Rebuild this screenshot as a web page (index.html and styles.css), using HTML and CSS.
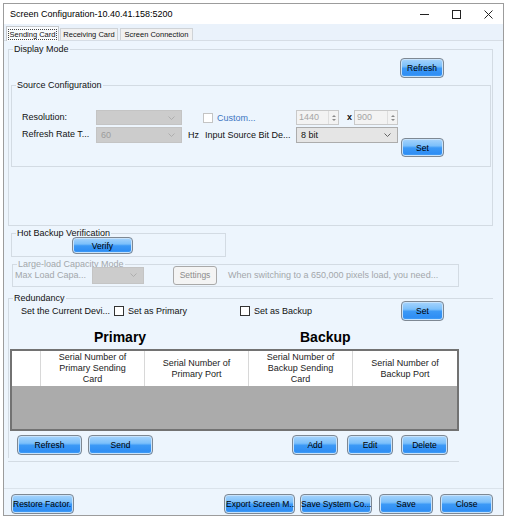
FILE: index.html
```html
<!DOCTYPE html>
<html>
<head>
<meta charset="utf-8">
<title>Screen Configuration</title>
<link rel="stylesheet" href="styles.css">
</head>
<body>
<div class="window">
  <div class="titlebar">
    <span class="title">Screen Configuration-10.40.41.158:5200</span>
    <div class="controls">
      <svg width="9" height="9" viewBox="0 0 9 9"><path d="M0 4.5H9" stroke="#222" stroke-width="1"/></svg>
      <svg width="9" height="9" viewBox="0 0 9 9"><rect x="0.5" y="0.5" width="8" height="8" fill="none" stroke="#222" stroke-width="1"/></svg>
      <svg width="9" height="9" viewBox="0 0 9 9"><path d="M0.5 0.5L8.5 8.5M8.5 0.5L0.5 8.5" stroke="#222" stroke-width="1"/></svg>
    </div>
  </div>

  <div class="tabs">
    <div class="tab active"><span class="focus">Sending Card</span></div>
    <div class="tab t-recv">Receiving Card</div>
    <div class="tab t-conn">Screen Connection</div>
  </div>

  <div class="page">
    <div class="group g-display">
      <div class="gtitle">Display Mode</div>
      <div class="refresh-row"><button class="btn b-refresh">Refresh</button></div>

      <div class="group g-source">
        <div class="gtitle">Source Configuration</div>
        <div class="src-row r1">
          <span class="lbl">Resolution:</span>
          <div class="combo disabled w86"><span class="ctext"></span><svg class="chev" width="7" height="4" viewBox="0 0 7 4"><path d="M0.5 0.5L3.5 3.5L6.5 0.5" fill="none" stroke="#aaa" stroke-width="0.9"/></svg></div>
          <div class="chk-wrap">
            <span class="chk light"></span><span class="custom">Custom...</span>
          </div>
          <div class="spin w43"><span class="stext">1440</span><span class="sarrows"><i class="up"></i><i class="down"></i></span></div>
          <span class="xsep">x</span>
          <div class="spin w44"><span class="stext">900</span><span class="sarrows"><i class="up"></i><i class="down"></i></span></div>
        </div>
        <div class="src-row r2">
          <span class="lbl">Refresh Rate T...</span>
          <div class="combo disabled w86"><span class="ctext">60</span><svg class="chev" width="7" height="4" viewBox="0 0 7 4"><path d="M0.5 0.5L3.5 3.5L6.5 0.5" fill="none" stroke="#aaa" stroke-width="0.9"/></svg></div>
          <span class="hz">Hz</span>
          <span class="lbl2">Input Source Bit De...</span>
          <div class="combo active w102"><span class="ctext">8 bit</span><svg class="chev" width="7" height="4" viewBox="0 0 7 4"><path d="M0.5 0.5L3.5 3.5L6.5 0.5" fill="none" stroke="#555" stroke-width="0.9"/></svg></div>
          <button class="btn b-set1">Set</button>
        </div>
      </div>
    </div>

    <div class="group g-hot">
      <div class="gtitle">Hot Backup Verification</div>
      <button class="btn b-verify">Verify</button>
    </div>

    <div class="group g-large">
      <div class="gtitle dim">Large-load Capacity Mode</div>
      <div class="large-row">
        <span class="lbl3 dim">Max Load Capa...</span>
        <div class="combo disabled w52"><span class="ctext"></span><svg class="chev" width="7" height="4" viewBox="0 0 7 4"><path d="M0.5 0.5L3.5 3.5L6.5 0.5" fill="none" stroke="#aaa" stroke-width="0.9"/></svg></div>
        <button class="dbtn">Settings</button>
        <span class="note dim">When switching to a 650,000 pixels load, you need...</span>
      </div>
    </div>

    <div class="group g-red">
      <div class="gtitle">Redundancy</div>
      <div class="red-row">
        <span class="lbl4">Set the Current Devi...</span>
        <div class="cb cb1"><span class="chk"></span><span>Set as Primary</span></div>
        <div class="cb cb2"><span class="chk"></span><span>Set as Backup</span></div>
        <button class="btn b-set2">Set</button>
      </div>
      <div class="heads">
        <span class="h-primary">Primary</span>
        <span class="h-backup">Backup</span>
      </div>
      <div class="table">
        <div class="thead">
          <div class="th"></div>
          <div class="th">Serial Number of<br>Primary Sending<br>Card</div>
          <div class="th">Serial Number of<br>Primary Port</div>
          <div class="th">Serial Number of<br>Backup Sending<br>Card</div>
          <div class="th">Serial Number of<br>Backup Port</div>
        </div>
        <div class="tbody"></div>
      </div>
      <div class="tbl-btns">
        <button class="btn b-w65">Refresh</button>
        <button class="btn b-w65 b-send">Send</button>
        <button class="btn b-add">Add</button>
        <button class="btn b-edit">Edit</button>
        <button class="btn b-del">Delete</button>
      </div>
    </div>
  </div>

  <div class="footer">
    <button class="btn f-restore">Restore Factor.</button>
    <button class="btn f-export">Export Screen M...</button>
    <button class="btn f-savesys">Save System Co...</button>
    <button class="btn f-save">Save</button>
    <button class="btn f-close">Close</button>
  </div>
</div>
</body>
</html>
```

FILE: styles.css
```css
* { box-sizing: border-box; }
html, body { margin: 0; padding: 0; background: #ffffff; }
body {
  font-family: "Liberation Sans", Arial, sans-serif;
  font-size: 9px;
  color: #111;
}

.window {
  margin: 3px 0 0 3px;
  width: 501px;
  height: 513px;
  border: 1px solid #9c9c9c;
  background: #edf5fd;
  display: flex;
  flex-direction: column;
}

/* title bar */
.titlebar {
  height: 20px;
  flex: none;
  background: #ffffff;
  display: flex;
  align-items: center;
  padding-left: 6px;
}
.title { font-size: 9px; color: #000; }
.controls {
  margin-left: auto;
  display: flex;
  align-items: center;
  gap: 23px;
  padding-right: 10px;
}
.controls svg { display: block; }

/* tabs */
.tabs {
  height: 17px;
  flex: none;
  display: flex;
  align-items: flex-end;
  padding-left: 2px;
  border-bottom: 1px solid #d6dde5;
  background: #eaf2fb;
}
.tab {
  height: 12px;
  border: 1px solid #cfd3d7;
  border-bottom: none;
  background: #f1f1f1;
  font-size: 7.5px;
  line-height: 11px;
  text-align: center;
  margin-left: 1px;
  color: #111;
}
.tab.active {
  width: 53px;
  height: 15px;
  margin-left: 0;
  margin-bottom: -1px;
  background: #f9fbfd;
  padding: 2px 1px 0;
  border-color: #c6c9cc;
}
.focus {
  display: block;
  border: 1px dotted #444;
  line-height: 9px;
  height: 11px;
}
.t-recv { width: 58px; margin-left: 1px; }
.t-conn { width: 73px; margin-left: 2px; }

/* page */
.page {
  height: 447px;
  flex: none;
  padding-top: 8px;
}

.group {
  border: 1px solid #d3dbe3;
}
.gtitle {
  width: fit-content;
  height: 11px;
  line-height: 11px;
  margin: -6px 0 -5px 4px;
  padding: 0 1px;
  background: #edf5fd;
  font-size: 9px;
  color: #111;
}
.dim { color: #a3a7ab; }

.g-display {
  margin-left: 4px;
  width: 485px;
  height: 177px;
}
.refresh-row {
  display: flex;
  justify-content: flex-end;
  padding-right: 48px;
  margin-top: 8px;
}
.g-source {
  margin: 7px 1px 0 2px;
  height: 82px;
}
.src-row {
  display: flex;
  padding-left: 10px;
}
.r1 { margin-top: 24px; height: 15px; align-items: center; }
.r2 { margin-top: 2px; align-items: flex-start; }
.lbl { width: 74px; }
.r1 .lbl { line-height: 15px; }
.r2 .lbl { line-height: 14px; }

.combo {
  display: flex;
  align-items: center;
  height: 15px;
  padding: 0 6px 0 4px;
  border: 1px solid #c2c2c2;
}
.r2 .combo { height: 16px; }
.combo.disabled { background: #cccccc; color: #9c9c9c; border-color: #c4c4c4; }
.combo.active { background: #e5e5e5; border-color: #acacac; color: #111; }
.ctext { flex: 1; }
.chev { display: block; }
.w86 { width: 86px; }
.w102 { width: 102px; }
.w52 { width: 52px; height: 17px; }

.chk-wrap {
  display: flex;
  align-items: center;
  width: 93px;
  margin-left: 21px;
}
.chk {
  display: inline-block;
  width: 10px;
  height: 10px;
  border: 1px solid #333;
  background: #fff;
  flex: none;
}
.chk.light { border-color: #c4c4c4; }
.custom { margin-left: 4px; color: #3c74c2; }

.spin {
  display: flex;
  height: 15px;
  border: 1px solid #c9c9c9;
  background: #f3f3f3;
  color: #a5a5a5;
}
.w43 { width: 43px; }
.w44 { width: 44px; }
.stext { flex: 1; padding-left: 2px; line-height: 13px; }
.sarrows {
  width: 10px;
  border-left: 1px solid #dedede;
  display: flex;
  flex-direction: column;
  align-items: center;
  justify-content: center;
  gap: 2px;
}
.sarrows i {
  display: block;
  width: 0;
  height: 0;
  border-left: 2px solid transparent;
  border-right: 2px solid transparent;
}
.sarrows .up { border-bottom: 2px solid #8a8a8a; }
.sarrows .down { border-top: 2px solid #8a8a8a; }
.xsep { width: 15px; padding-left: 8px; font-weight: bold; line-height: 15px; }

.hz { margin-left: 6px; width: 17px; line-height: 17px; }
.lbl2 { width: 91px; line-height: 17px; }

/* buttons */
.btn {
  display: block;
  font-family: "Liberation Sans", Arial, sans-serif;
  font-size: 8.5px;
  color: #000;
  height: 20px;
  padding: 0;
  border: 1px solid #7e8893;
  border-radius: 4px;
  background: linear-gradient(#a7d4fc 0%, #7cc0fb 40%, #3c99f6 52%, #2f8ef4 85%, #4ca5f7 100%);
  box-shadow: inset 0 0 0 1px #c7e2fb;
  white-space: nowrap;
  overflow: hidden;
  text-align: center;
}
.b-refresh { width: 44px; }
.b-set1 { width: 43px; height: 19px; margin-left: 3px; margin-top: 11px; }

.g-hot {
  margin: 7px 0 0 7px;
  width: 215px;
  height: 24px;
}
.b-verify { width: 61px; height: 17px; margin: 3px 0 0 60px; }

.g-large {
  margin: 7px 0 0 8px;
  width: 447px;
  height: 23px;
}
.large-row {
  display: flex;
  align-items: center;
  height: 20px;
  padding-left: 2px;
}
.lbl3 { width: 77px; }
.dbtn {
  font-family: "Liberation Sans", Arial, sans-serif;
  font-size: 8.5px;
  color: #8c8c8c;
  width: 44px;
  height: 19px;
  margin-left: 29px;
  padding: 0;
  border: 1px solid #a9a9a9;
  border-radius: 3px;
  background: #f4f4f4;
}
.note { margin-left: 11px; }

.g-red {
  margin: 11px 0 0 4px;
  width: 485px;
  height: 160px;
  border-right: none;
  border-bottom: none;
}
.red-row {
  display: flex;
  align-items: center;
  margin-top: 2px;
  height: 20px;
  padding-left: 12px;
}
.lbl4 { width: 93px; }
.cb { display: flex; align-items: center; }
.cb .chk { margin-right: 4px; }
.cb1 { width: 126px; }
.cb2 { width: 161px; }
.b-set2 { width: 43px; }

.heads {
  margin-top: 8px;
  height: 16px;
  display: flex;
  font-size: 14px;
  font-weight: bold;
  line-height: 16px;
  color: #000;
}
.h-primary { margin-left: 85px; width: 52px; }
.h-backup { margin-left: 154px; }

.table {
  margin: 4px 0 0 1px;
  width: 449px;
  height: 82px;
  border: 2px solid #727272;
  display: flex;
  flex-direction: column;
}
.thead {
  height: 35px;
  background: #ffffff;
  display: grid;
  grid-template-columns: 28px 104px 104px 104px 1fr;
}
.th {
  display: flex;
  align-items: center;
  justify-content: center;
  text-align: center;
  font-size: 9px;
  line-height: 11px;
  color: #222;
  border-left: 1px solid #d8d8d8;
}
.th:first-child { border-left: none; }
.tbody { flex: 1; background: #ababab; }

.tbl-btns {
  display: flex;
  margin: 4px 0 0 -1px;
  width: 451px;
  height: 27px;
  padding: 0 0 0 9px;
  border-bottom: 1px solid #d3dbe3;
}
.b-w65 { width: 65px; }
.b-send { margin-left: 6px; }
.b-add { width: 46px; margin-left: 139px; }
.b-edit { width: 46px; margin-left: 9px; }
.b-del { width: 47px; margin-left: 8px; }

/* footer */
.footer {
  flex: 1;
  border-top: 1px solid #dbe3eb;
  display: flex;
  padding-top: 5px;
}
.f-restore { width: 63px; margin-left: 7px; text-align: left; padding-left: 1px; }
.f-export { width: 71px; margin-left: 150px; padding-left: 1px; }
.f-savesys { width: 72px; margin-left: 5px; }
.f-save { width: 54px; margin-left: 7px; }
.f-close { width: 53px; margin-left: 7px; }
```
